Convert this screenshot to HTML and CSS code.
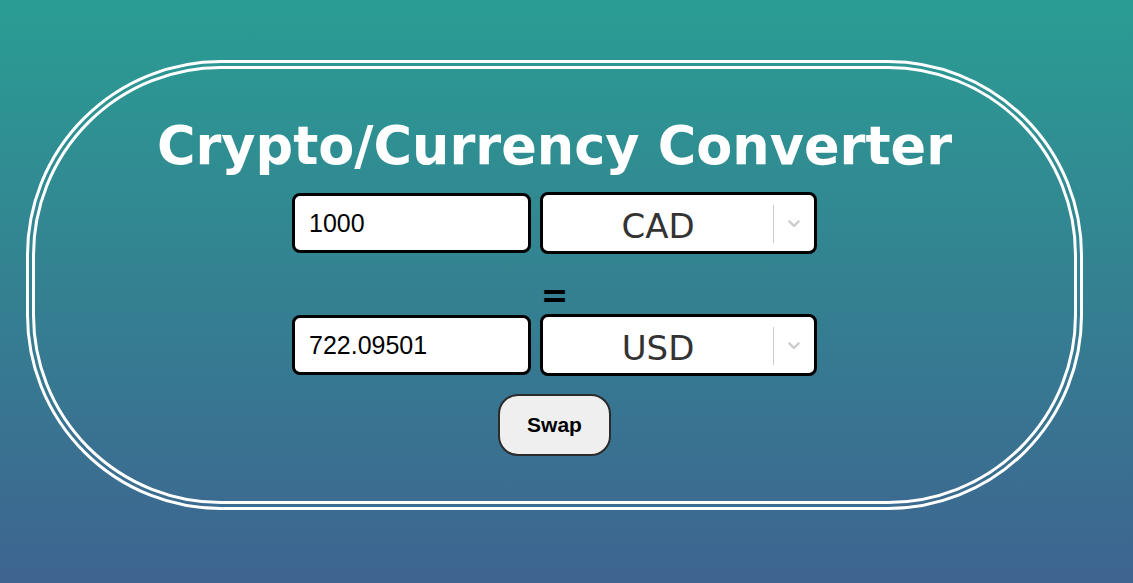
FILE: index.html
```html
<!DOCTYPE html>
<html lang="en">
<head>
<meta charset="utf-8">
<title>Crypto/Currency Converter</title>
<link rel="stylesheet" href="styles.css">
</head>
<body>
<div class="app">
  <div class="card">
    <h1 class="title">Crypto/Currency Converter</h1>
    <div class="row">
      <input class="amount" type="text" value="1000">
      <div class="select">
        <div class="select-value">CAD</div>
        <div class="select-indicators">
          <span class="sep"></span>
          <span class="chev"><svg width="20" height="20" viewBox="0 0 20 20"><path d="M4.516 7.548c0.436-0.446 1.043-0.481 1.576 0l3.908 3.747 3.908-3.747c0.533-0.481 1.141-0.446 1.574 0 0.436 0.445 0.408 1.197 0 1.615-0.406 0.418-4.695 4.502-4.695 4.502-0.217 0.223-0.502 0.335-0.787 0.335s-0.57-0.112-0.789-0.335c0 0-4.287-4.084-4.695-4.502s-0.436-1.17 0-1.615z" fill="#cccccc"/></svg></span>
        </div>
      </div>
    </div>
    <div class="equals">=</div>
    <div class="row">
      <input class="amount" type="text" value="722.09501">
      <div class="select">
        <div class="select-value">USD</div>
        <div class="select-indicators">
          <span class="sep"></span>
          <span class="chev"><svg width="20" height="20" viewBox="0 0 20 20"><path d="M4.516 7.548c0.436-0.446 1.043-0.481 1.576 0l3.908 3.747 3.908-3.747c0.533-0.481 1.141-0.446 1.574 0 0.436 0.445 0.408 1.197 0 1.615-0.406 0.418-4.695 4.502-4.695 4.502-0.217 0.223-0.502 0.335-0.787 0.335s-0.57-0.112-0.789-0.335c0 0-4.287-4.084-4.695-4.502s-0.436-1.170 0-1.615z" fill="#cccccc"/></svg></span>
        </div>
      </div>
    </div>
    <button class="swap" type="button">Swap</button>
  </div>
</div>
</body>
</html>
```

FILE: styles.css
```css
html, body {
  margin: 0;
  padding: 0;
  height: 100%;
}
body {
  background: linear-gradient(to bottom, #2a9d93 0%, #3e6490 100%);
  font-family: "DejaVu Sans", Verdana, sans-serif;
}
.app {
  padding: 60px 0 0 26px;
}
.card {
  box-sizing: border-box;
  width: 1057px;
  height: 450px;
  border: 9px double #ffffff;
  border-radius: 195px;
  display: flex;
  flex-direction: column;
  align-items: center;
  padding-top: 46px;
}
.title {
  margin: 0;
  font-family: "DejaVu Sans", Verdana, sans-serif;
  font-weight: bold;
  font-size: 52.5px;
  line-height: 62px;
  color: #ffffff;
  margin-bottom: 15px;
}
.row {
  display: flex;
  align-items: center;
  gap: 9px;
}
.amount {
  box-sizing: border-box;
  width: 239px;
  height: 60px;
  border: 3px solid #000;
  border-radius: 8px;
  background: #fff;
  padding: 0 14px;
  font-family: "Liberation Sans", Arial, sans-serif;
  font-size: 25px;
  color: #000;
  outline: none;
}
.select {
  box-sizing: border-box;
  width: 277px;
  height: 62px;
  border: 3px solid #000;
  border-radius: 8px;
  background: #fff;
  display: flex;
  align-items: center;
}
.select-value {
  flex: 1;
  text-align: center;
  padding-top: 5px;
  font-family: "DejaVu Sans", Verdana, sans-serif;
  font-size: 34px;
  color: #333333;
}
.select-indicators {
  display: flex;
  align-items: center;
  align-self: stretch;
}
.sep {
  width: 1px;
  align-self: stretch;
  margin: 10px 0 8px;
  background: #cccccc;
}
.chev {
  display: flex;
  padding: 10px;
}
.equals {
  font-family: "DejaVu Sans", Verdana, sans-serif;
  font-weight: bold;
  font-size: 33px;
  line-height: 60px;
  height: 60px;
  padding-top: 12px;
  box-sizing: border-box;
  color: #000;
}
.swap {
  margin-top: 18px;
  box-sizing: border-box;
  width: 113px;
  height: 62px;
  border: 2px solid #2b2b2b;
  border-radius: 20px;
  background: #efefef;
  font-family: "Liberation Sans", Arial, sans-serif;
  font-weight: bold;
  font-size: 21px;
  color: #000;
  padding: 0;
}
```
